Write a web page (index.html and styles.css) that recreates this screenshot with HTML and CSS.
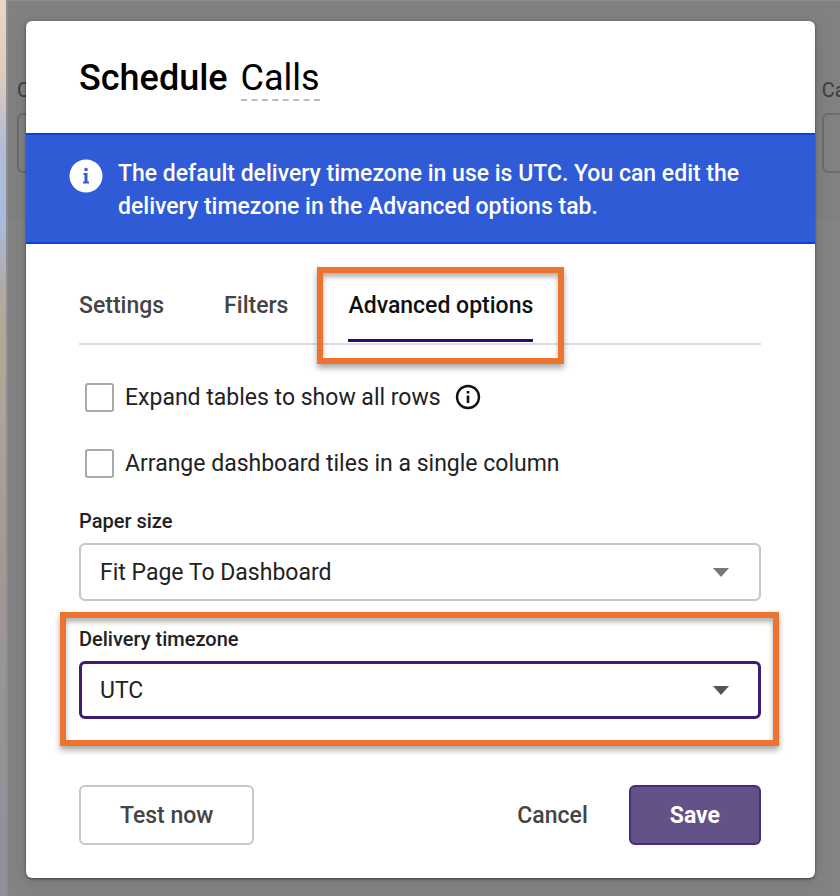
FILE: index.html
```html
<!DOCTYPE html>
<html lang="en">
<head>
    <meta charset="UTF-8">
    <meta name="viewport" content="width=device-width, initial-scale=1.0">
    <title>Schedule Calls</title>
    <link rel="stylesheet" href="styles.css">
</head>
<body>
    <div class="desktop-edge"></div>
    <div class="dashboard">
        <div class="filter-bar">
            <div class="filter">
                <label for="filter-1">C</label>
                <input type="text" id="filter-1">
            </div>
            <div class="filter">
                <label for="filter-2">Call</label>
                <input type="text" id="filter-2">
            </div>
        </div>
    </div>

    <div class="overlay">
        <form class="modal" role="dialog" aria-labelledby="modal-title">
            <header class="modal-header">
                <h1 id="modal-title">Schedule <span class="schedule-name">Calls</span></h1>
            </header>

            <div class="banner">
                <svg class="banner-icon" viewBox="0 0 34 34" aria-hidden="true">
                    <circle cx="17" cy="17" r="16.5" fill="#fff"/>
                    <circle cx="17" cy="10.5" r="1.8" fill="#2f5bd7"/>
                    <path d="M14.500 14h4v8.500h1.500v2h-6v-2h1.500v-6.500h-1z" fill="#2f5bd7"/>
                </svg>
                <p>The default delivery timezone in use is UTC. You can edit the delivery timezone in the Advanced options tab.</p>
            </div>

            <main class="modal-body">
                <nav class="tabs">
                    <a class="tab" href="#settings">Settings</a>
                    <a class="tab" href="#filters">Filters</a>
                    <a class="tab active highlight highlight-tab" href="#advanced">Advanced options</a>
                </nav>

                <div class="check-row">
                    <input type="checkbox" id="expand">
                    <label for="expand">Expand tables to show all rows</label>
                    <svg class="info-icon" viewBox="0 0 26 26" aria-hidden="true">
                        <circle cx="13" cy="13" r="11" fill="none" stroke="#111" stroke-width="2.4"/>
                        <path d="M11.700 7h2.600v2.600h-2.600zM11.700 11.500h2.600v7.500h-2.600z" fill="#111"/>
                    </svg>
                </div>
                <div class="check-row">
                    <input type="checkbox" id="arrange">
                    <label for="arrange">Arrange dashboard tiles in a single column</label>
                </div>

                <div class="field">
                    <label for="paper-size">Paper size</label>
                    <div class="select-wrap">
                        <select id="paper-size">
                            <option>Fit Page To Dashboard</option>
                        </select>
                    </div>
                </div>
                <div class="field highlight highlight-field">
                    <label for="timezone">Delivery timezone</label>
                    <div class="select-wrap focused">
                        <select id="timezone">
                            <option>UTC</option>
                        </select>
                    </div>
                </div>
            </main>

            <footer class="modal-footer">
                <button type="button" class="btn btn-outline">Test now</button>
                <button type="button" class="btn btn-text">Cancel</button>
                <button type="submit" class="btn btn-primary">Save</button>
            </footer>
        </form>
    </div>
</body>
</html>
```
FILE: styles.css
```css
* {
    box-sizing: border-box;
}

body {
    margin: 0;
    min-height: 100vh;
    display: flex;
    overflow: hidden;
    font-family: Roboto, "Liberation Sans", sans-serif;
    color: #222;
    background-color: #838383;
}

/* page behind the modal */
.desktop-edge {
    flex: 0 0 8px;
    border-right: 2px solid #8d8d90;
    background: linear-gradient(#ecd6c2 0%, #dfccbf 8%, #b0bbd6 17%, #a9bcdf 24%, #b4a99c 33%, #b3a598 42%, #a29894 64%, #949398 80%, #8f9097 100%);
}

.dashboard {
    flex: 1;
    min-width: 0;
    overflow: hidden;
    border-top: 1px solid #918e89;
}

.filter-bar {
    display: flex;
    gap: 23px;
    height: 218px;
    padding: 77px 0 0 9px;
    border-bottom: 1px solid #7d7d7d;
    background-color: #818181;
}

.filter {
    flex: 0 0 95%;
    color: #3c3c3c;
}

.filter label {
    display: block;
    font-size: 20px;
    line-height: 24px;
}

.filter input {
    width: 100%;
    height: 60px;
    margin-top: 11px;
    border: 2px solid #6c6c6c;
    border-radius: 6px;
    background: transparent;
}

.overlay {
    position: absolute;
    top: 0;
    left: 0;
    width: 100%;
    padding: 21px 25px 18px 26px;
}

.modal {
    background-color: #fff;
    border-radius: 6px;
    box-shadow: 0 1px 3px rgba(0, 0, 0, 0.5), 0 4px 20px rgba(0, 0, 0, 0.1);
}

.modal-header {
    padding: 36px 53px 32px;
}

h1 {
    margin: 0;
    font-size: 36px;
    line-height: 42px;
    font-weight: 500;
    color: #000;
}

.schedule-name {
    display: inline-block;
    margin-left: 4px;
    font-weight: 400;
    border-bottom: 2px dashed #bbb;
}

.banner {
    display: flex;
    gap: 15px;
    padding: 22px 53px 19px 43px;
    border-top: 2px solid #0645d3;
    border-bottom: 2px solid #0645d3;
    background-color: #2f5bd7;
    color: #fff;
}

.banner-icon {
    flex: none;
    width: 34px;
    height: 34px;
    margin-top: 2px;
}

.banner p {
    margin: 0;
    font-size: 23px;
    line-height: 33px;
    font-weight: 500;
}

.modal-body {
    padding: 36px 54px 0 53px;
}

.tabs {
    display: flex;
    gap: 60px;
    margin-bottom: 37px;
    padding-bottom: 1px;
    border-bottom: 2px solid #dedede;
}

.tab {
    height: 62px;
    padding-top: 12px;
    border-bottom: 3px solid transparent;
    font-size: 23px;
    line-height: 28px;
    font-weight: 500;
    color: #444;
    text-decoration: none;
}

.tab.active {
    border-bottom-color: #2c0a70;
    color: #111;
}

/* callout frames */
.highlight {
    position: relative;
}

.highlight::after {
    content: "";
    position: absolute;
    border: 6px solid #ed742e;
    box-shadow: 0 4px 6px rgba(0, 0, 0, 0.35), inset 0 4px 5px rgba(0, 0, 0, 0.3);
    pointer-events: none;
}

.highlight-tab::after {
    inset: -13px -31px -25px;
}

.highlight-field::after {
    inset: -15px -18px -27px -19px;
}

.check-row {
    display: flex;
    align-items: center;
    height: 30px;
    margin: 36px 0 36px 6px;
    font-size: 23px;
}

.check-row input {
    appearance: none;
    width: 29px;
    height: 29px;
    margin: 0 11px 0 0;
    border: 2px solid #a9a9a9;
    border-radius: 3px;
    background-color: #fff;
}

.check-row + .check-row {
    margin-bottom: 31px;
}

.info-icon {
    width: 26px;
    height: 26px;
    margin-left: 14px;
}

.field label {
    display: block;
    font-size: 20px;
    line-height: 24px;
    font-weight: 500;
}

.select-wrap {
    position: relative;
    margin-top: 10px;
}

.select-wrap::after {
    content: "";
    position: absolute;
    right: 32px;
    top: 25px;
    border: 8px solid transparent;
    border-top: 9px solid #777;
    border-bottom: 0;
    pointer-events: none;
}

select {
    appearance: none;
    display: block;
    width: 100%;
    height: 58px;
    padding: 0 60px 0 19px;
    border: 2px solid #c5c5c5;
    border-radius: 6px;
    background-color: #fff;
    font-family: inherit;
    font-size: 23px;
    color: #222;
}

.field + .field {
    margin-top: 26px;
}

.focused select {
    padding-left: 18px;
    border: 3px solid #3d1a78;
}

.focused::after {
    border-top-color: #555;
}

.modal-footer {
    display: flex;
    justify-content: flex-end;
    padding: 66px 54px 33px 53px;
}

.btn {
    height: 60px;
    padding: 0 39px;
    border: 2px solid transparent;
    border-radius: 6px;
    background-color: #fff;
    font-family: inherit;
    font-size: 23px;
    font-weight: 500;
    color: #444;
    cursor: pointer;
}

.btn-outline {
    margin-right: auto;
    border-color: #c8c8c8;
}

.btn-primary {
    border-color: #4a2a7c;
    background-color: #625287;
    font-weight: 700;
    color: #fff;
}
```
